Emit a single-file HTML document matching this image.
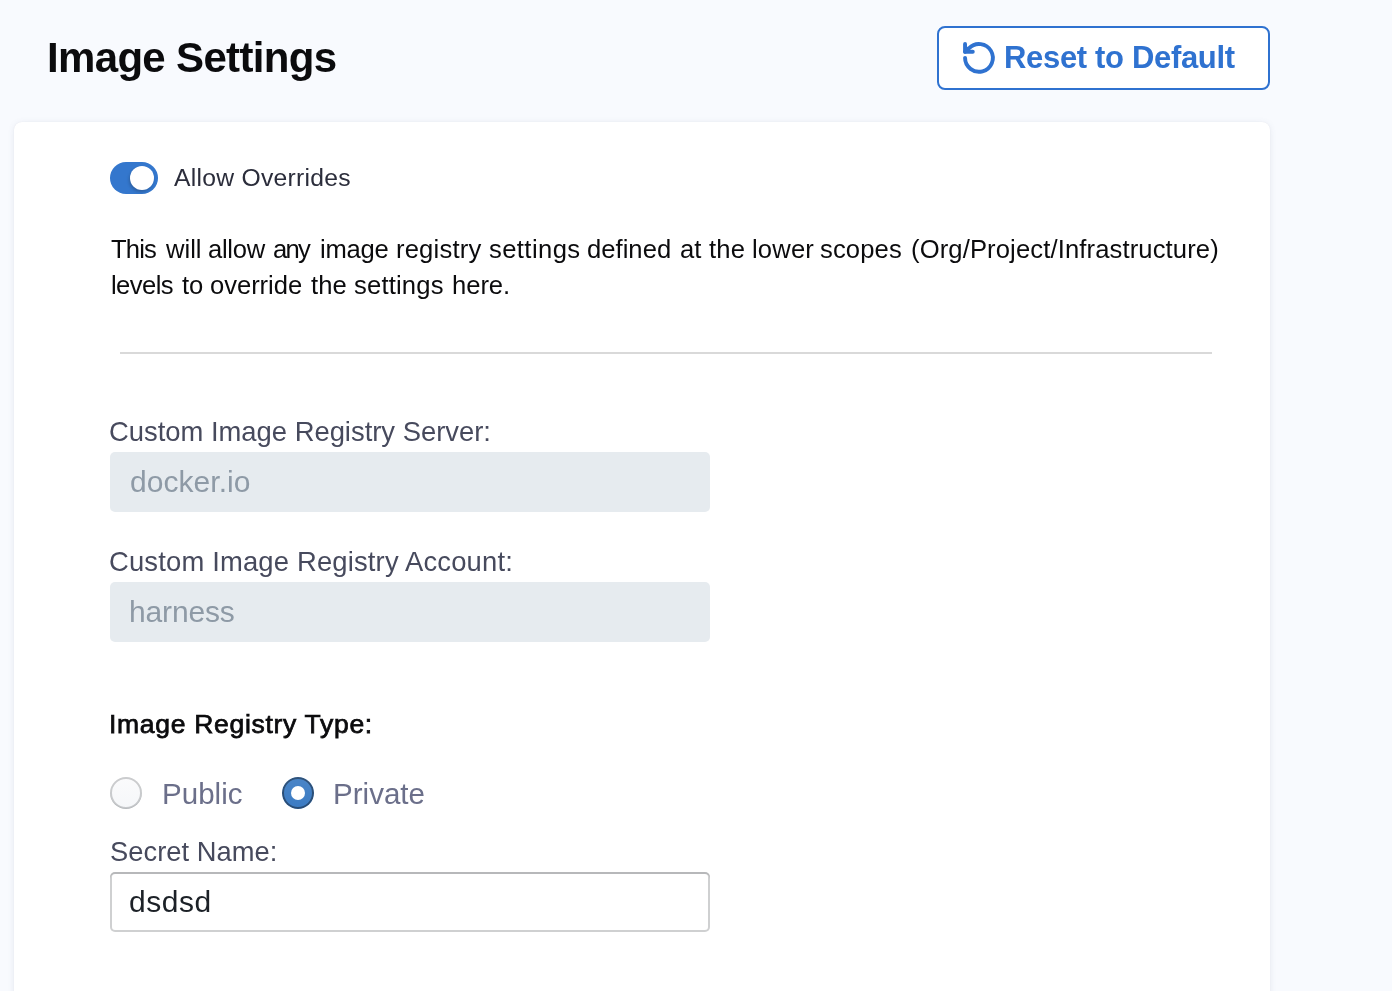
<!DOCTYPE html>
<html>
<head>
<meta charset="utf-8">
<style>
html,body{margin:0;padding:0;}
body{width:1392px;height:991px;overflow:hidden;background:#F8FAFE;font-family:"Liberation Sans",sans-serif;position:relative;}
.t{position:absolute;white-space:nowrap;line-height:1;will-change:transform;}
#title{left:46.70px;top:36.91px;font-size:42px;font-weight:700;color:#0B0B0D;letter-spacing:-0.665px;}
#btn{position:absolute;left:937px;top:26px;width:333px;height:64px;box-sizing:border-box;border:2px solid #2F72D0;border-radius:8px;background:#fff;}
#btntxt{left:1003.56px;top:41.71px;font-size:31px;font-weight:700;color:#2F72D0;letter-spacing:-0.331px;}
#icon{position:absolute;left:955px;top:38px;}
#card{position:absolute;left:14px;top:122px;width:1256px;height:900px;background:#fff;border-radius:8px;box-shadow:0 0 1px rgba(40,41,61,0.08),0 1px 6px rgba(96,106,140,0.12);}
#toggle{position:absolute;left:110px;top:162px;width:48px;height:32px;border-radius:16px;background:#3477CD;overflow:hidden;}
#knob{position:absolute;left:20px;top:4px;width:24px;height:24px;border-radius:12px;background:#fff;box-shadow:-1px 2px 3px rgba(17,20,24,0.22);}
#allow{left:174.44px;top:165.91px;font-size:24.7px;color:#2B2D3B;letter-spacing:0.263px;}
.p{left:110px;font-size:25.8px;color:#0B0B0D;}
#divider{position:absolute;left:120px;top:352px;width:1092px;height:2px;background:#D9D9D9;}
.lab{left:110px;font-size:27.5px;color:#474A5D;}
#lab1{top:418.11px;left:109.42px;font-size:27.4px;letter-spacing:-0.006px;}
#lab2{top:548.01px;left:109.42px;font-size:27.4px;letter-spacing:0.171px;}
.inp{position:absolute;left:110px;width:600px;height:60px;border-radius:5px;background:#E6EBEF;}
#in1{top:452px;}
#in2{top:582px;}
.dis{left:130px;font-size:30px;color:#8E9AA6;}
#docker{top:467.11px;left:129.78px;font-size:30px;letter-spacing:0.040px;}
#harness{top:597.00px;left:128.98px;font-size:30px;letter-spacing:-0.160px;}
#type{left:109.20px;top:710.51px;font-size:26.5px;font-weight:400;-webkit-text-stroke:0.75px #0B0B0D;color:#0B0B0D;letter-spacing:0.699px;}
.radio{position:absolute;top:777px;width:32px;height:32px;border-radius:50%;box-sizing:border-box;}
#r1{left:110px;background:linear-gradient(to bottom,#FBFBFC,#F5F7F9);box-shadow:inset 0 0 0 2px rgba(17,20,24,0.2),inset 0 -1px 0 rgba(17,20,24,0.08);}
#r2{left:282px;background:#3B7BC3 linear-gradient(to bottom,rgba(255,255,255,0.08),rgba(255,255,255,0));box-shadow:inset 0 0 0 2px rgba(17,20,24,0.45);}
#r2:after{content:"";position:absolute;left:9px;top:9px;width:14px;height:14px;border-radius:50%;background:#fff;}
.rl{top:779px;font-size:29.6px;color:#6B6F8A;}
#public{left:161.70px;top:778.81px;font-size:29.5px;letter-spacing:0.032px;}
#private{left:333.26px;top:778.81px;font-size:29.5px;letter-spacing:0.027px;}
#secret{left:110.36px;top:837.91px;font-size:27.3px;color:#474A5D;letter-spacing:0.044px;}
#in3{position:absolute;left:110px;top:872px;width:600px;height:60px;box-sizing:border-box;border-radius:5px;background:#fff;box-shadow:inset 0 0 0 2px rgba(17,20,24,0.2),inset 0 2px 0 rgba(17,20,24,0.12);}
#dsdsd{left:129.42px;top:886.91px;font-size:30px;color:#1C2127;letter-spacing:0.520px;}
#w0_0{left:111.16px;top:236.91px;font-size:25.6px;letter-spacing:-0.853px;}
#w0_1{left:165.66px;top:236.91px;font-size:25.6px;letter-spacing:0.000px;}
#w0_2{left:207.64px;top:236.91px;font-size:25.6px;letter-spacing:-0.280px;}
#w0_3{left:272.50px;top:236.91px;font-size:25.6px;letter-spacing:-1.760px;}
#w0_4{left:320.22px;top:236.91px;font-size:25.6px;letter-spacing:-0.240px;}
#w0_5{left:396.36px;top:236.91px;font-size:25.6px;letter-spacing:0.183px;}
#w0_6{left:489.14px;top:236.91px;font-size:25.6px;letter-spacing:0.411px;}
#w0_7{left:587.00px;top:236.91px;font-size:25.6px;letter-spacing:0.027px;}
#w0_8{left:679.50px;top:236.91px;font-size:25.6px;letter-spacing:0.000px;}
#w0_9{left:709.38px;top:236.91px;font-size:25.6px;letter-spacing:0.160px;}
#w0_10{left:751.78px;top:236.91px;font-size:25.6px;letter-spacing:0.160px;}
#w0_11{left:820.28px;top:236.91px;font-size:25.6px;letter-spacing:0.128px;}
#w0_12{left:911.36px;top:236.91px;font-size:25.6px;letter-spacing:0.124px;}
#w1_0{left:110.50px;top:272.81px;font-size:25.6px;letter-spacing:-0.576px;}
#w1_1{left:182.38px;top:272.81px;font-size:25.6px;letter-spacing:-0.000px;}
#w1_2{left:210.28px;top:272.81px;font-size:25.6px;letter-spacing:-0.046px;}
#w1_3{left:311.16px;top:272.81px;font-size:25.6px;letter-spacing:0.080px;}
#w1_4{left:354.42px;top:272.81px;font-size:25.6px;letter-spacing:0.183px;}
#w1_5{left:452.00px;top:272.81px;font-size:25.6px;letter-spacing:-0.040px;}
</style>
</head>
<body>
<div class="t" id="title">Image Settings</div>
<div id="btn"></div>
<svg id="icon" width="48" height="40" viewBox="955 38 48 40">
  <path d="M965.05 57.85 A13.9 13.9 0 1 0 969.12 48.02 L965.05 51.8" fill="none" stroke="#2F72D0" stroke-width="3.9" stroke-linecap="round" stroke-linejoin="round"/>
  <path d="M965.05 44 V51.8 H972.8" fill="none" stroke="#2F72D0" stroke-width="3.9" stroke-linecap="round" stroke-linejoin="round"/>
</svg>
<div class="t" id="btntxt">Reset to Default</div>
<div id="card"></div>
<div id="toggle"><div id="knob"></div></div>
<div class="t" id="allow">Allow Overrides</div>
<div class="t p" id="w0_0">This</div>
<div class="t p" id="w0_1">will</div>
<div class="t p" id="w0_2">allow</div>
<div class="t p" id="w0_3">any</div>
<div class="t p" id="w0_4">image</div>
<div class="t p" id="w0_5">registry</div>
<div class="t p" id="w0_6">settings</div>
<div class="t p" id="w0_7">defined</div>
<div class="t p" id="w0_8">at</div>
<div class="t p" id="w0_9">the</div>
<div class="t p" id="w0_10">lower</div>
<div class="t p" id="w0_11">scopes</div>
<div class="t p" id="w0_12">(Org/Project/Infrastructure)</div>
<div class="t p" id="w1_0">levels</div>
<div class="t p" id="w1_1">to</div>
<div class="t p" id="w1_2">override</div>
<div class="t p" id="w1_3">the</div>
<div class="t p" id="w1_4">settings</div>
<div class="t p" id="w1_5">here.</div>
<div id="divider"></div>
<div class="t lab" id="lab1">Custom Image Registry Server:</div>
<div class="inp" id="in1"></div>
<div class="t dis" id="docker">docker.io</div>
<div class="t lab" id="lab2">Custom Image Registry Account:</div>
<div class="inp" id="in2"></div>
<div class="t dis" id="harness">harness</div>
<div class="t" id="type">Image Registry Type:</div>
<div class="radio" id="r1"></div>
<div class="t rl" id="public">Public</div>
<div class="radio" id="r2"></div>
<div class="t rl" id="private">Private</div>
<div class="t" id="secret">Secret Name:</div>
<div id="in3"></div>
<div class="t" id="dsdsd">dsdsd</div>
</body>
</html>
